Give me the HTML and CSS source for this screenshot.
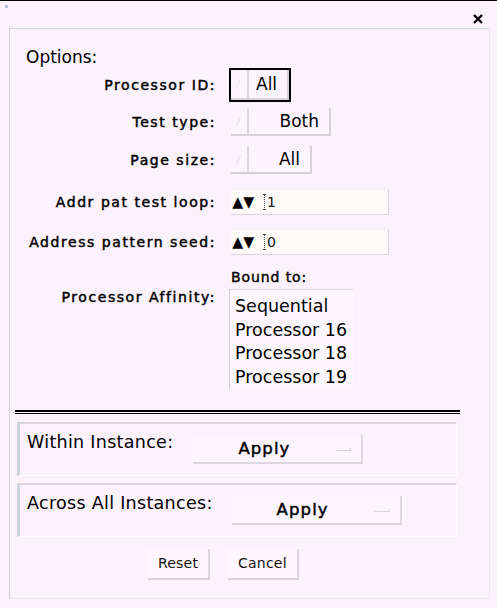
FILE: index.html
```html
<!DOCTYPE html>
<html>
<head>
<meta charset="utf-8">
<link rel="stylesheet" href="styles.css">
</head>
<body>
<div class="window">
  <div class="titlebar">
    <span class="corner"></span>
    <svg class="close" width="10" height="10" viewBox="0 0 10 10"><path d="M1 1L9 9M9 1L1 9" stroke="#000" stroke-width="2.4"/></svg>
  </div>
  <div class="frame">
    <div class="options-title">Options:</div>
    <div class="form">
      <div class="row r1">
        <div class="label">Processor ID:</div>
        <div class="ctl"><div class="choice focus"><span class="seg"></span><span class="val">All</span></div></div>
      </div>
      <div class="row r2">
        <div class="label">Test type:</div>
        <div class="ctl"><div class="choice w100"><span class="seg"></span><span class="val right">Both</span></div></div>
      </div>
      <div class="row r3">
        <div class="label">Page size:</div>
        <div class="ctl"><div class="choice w81"><span class="seg"></span><span class="val right">All</span></div></div>
      </div>
      <div class="row r4">
        <div class="label">Addr pat test loop:</div>
        <div class="ctl"><div class="spin"><span class="arrows"><span>▲</span><span>▼</span></span><span class="caret"></span><span class="num">1</span></div></div>
      </div>
      <div class="row r5">
        <div class="label">Address pattern seed:</div>
        <div class="ctl"><div class="spin"><span class="arrows"><span>▲</span><span>▼</span></span><span class="caret"></span><span class="num">0</span></div></div>
      </div>
      <div class="row r6">
        <div class="label"></div>
        <div class="ctl"><div class="bound">Bound to:</div></div>
      </div>
      <div class="row r7">
        <div class="label top">Processor Affinity:</div>
        <div class="ctl">
          <div class="list">
            <div>Sequential</div>
            <div>Processor 16</div>
            <div>Processor 18</div>
            <div>Processor 19</div>
          </div>
        </div>
      </div>
    </div>
    <div class="sep"></div>
    <div class="panel">
      <div class="plabel">Within Instance:</div>
      <div class="apply a1"><span class="atext">Apply</span><span class="ind"></span></div>
    </div>
    <div class="panel p2">
      <div class="plabel">Across All Instances:</div>
      <div class="apply a2"><span class="atext">Apply</span><span class="ind"></span></div>
    </div>
    <div class="buttons">
      <div class="btn">Reset</div>
      <div class="btn">Cancel</div>
    </div>
  </div>
</div>
</body>
</html>
```
FILE: styles.css
```css
html, body {
  margin: 0;
  padding: 0;
}
body {
  width: 497px;
  height: 608px;
  overflow: hidden;
  background: #fcf2fc;
  font-family: "DejaVu Sans", sans-serif;
  color: #000;
}
.window {
  border-top: 1px solid #000;
  height: 607px;
  box-sizing: border-box;
}
.titlebar {
  height: 27px;
  margin: 0 8px 0 9px;
  border-bottom: 1px solid #cdd3e3;
  position: relative;
}
.corner {
  position: absolute;
  left: -4px;
  top: 4px;
  width: 3px;
  height: 3px;
  background: #b8c0dc;
}
.close {
  position: absolute;
  right: 6px;
  top: 13px;
}
.frame {
  margin: 0 7px 0 9px;
  height: 570px;
  border-left: 1px solid #d6ccd6;
  border-right: 1px solid #efe6ef;
  border-bottom: 1px solid #efe6ef;
  box-sizing: border-box;
  display: flex;
  flex-direction: column;
}
.options-title {
  font-size: 17px;
  line-height: 20px;
  margin: 18px 0 0 16px;
}
.form {
  display: flex;
  flex-direction: column;
  margin-top: 1px;
}
.row {
  display: flex;
}
.r2 { margin-top: 6px; }
.r3 { margin-top: 10px; }
.r4 { margin-top: 15px; }
.r5 { margin-top: 14px; }
.r6 { margin-top: 13px; }
.r7 { margin-top: 3px; }
.label {
  width: 206px;
  flex: none;
  font-size: 14px;
  letter-spacing: 1.55px;
  -webkit-text-stroke: 0.45px #000;
  display: flex;
  align-items: center;
  justify-content: flex-end;
  white-space: nowrap;
}
.label.top {
  align-items: flex-start;
  padding-top: 0;
  line-height: 16px;
}
.ctl {
  display: flex;
  align-items: center;
  margin-left: 15px;
}
.r1 .ctl { height: 34px; }
.choice {
  display: flex;
  height: 28px;
  width: 58px;
  background: #fcf4fc;
  border-bottom: 2px solid #d8d0d8;
  border-right: 2px solid #d8d0d8;
  box-sizing: border-box;
}
.choice.focus {
  height: 30px;
  outline: 2px solid #000;
  outline-offset: 0;
}
.choice.w100 { width: 100px; }
.choice.w81 { width: 81px; }
.seg {
  width: 16px;
  border-right: 2px solid #ddd6e0;
  position: relative;
  flex: none;
}
.seg::after {
  content: "";
  position: absolute;
  left: 7px;
  top: 9px;
  width: 1px;
  height: 9px;
  background: #dde0ec;
  transform: skewX(-25deg);
}
.val {
  flex: 1;
  font-size: 17px;
  line-height: 27px;
  padding-left: 7px;
}
.choice.focus .val { line-height: 29px; }
.val.right {
  text-align: right;
  padding-left: 0;
  padding-right: 10px;
}
.spin {
  width: 158px;
  height: 26px;
  box-sizing: border-box;
  background: #fffafa;
  border-bottom: 1px solid #d8d4e0;
  border-right: 1px solid #d8d4e0;
  border-top: 1px solid #f6f0ea;
  display: flex;
  align-items: center;
}
.arrows {
  display: flex;
  font-size: 15px;
  margin-left: 1px;
  width: 30px;
  letter-spacing: -1px;
}
.arrows span {
  display: inline-block;
  transform: scaleX(0.95);
}
.caret {
  width: 3px;
  height: 16px;
  border-left: 1px dotted #555;
  margin-left: 2px;
  position: relative;
}
.caret::before, .caret::after {
  content: "";
  position: absolute;
  left: -2px;
  width: 3px;
  height: 1px;
  background: #444;
}
.caret::before { top: 0; }
.caret::after { bottom: 0; }
.num {
  font-size: 14px;
  margin-left: -1px;
  color: #111;
}
.bound {
  font-size: 14px;
  letter-spacing: 0.9px;
  -webkit-text-stroke: 0.4px #000;
  line-height: 18px;
}
.list {
  width: 124px;
  height: 100px;
  box-sizing: border-box;
  margin-left: -2px;
  border-top: 1px solid #dcd6e2;
  border-left: 1px solid #cfc9d9;
  background: #fdf6fd;
  padding: 5px 0 0 5px;
  font-size: 17.5px;
  line-height: 23.5px;
  white-space: nowrap;
}
.sep {
  margin: 21px 29px 0 5px;
  height: 4px;
  border-top: 2px solid #000;
  border-bottom: 1px solid #000;
  box-sizing: border-box;
}
.panel {
  margin: 8px 32px 0 7px;
  height: 54px;
  box-sizing: border-box;
  border-top: 2px solid #d9d4dc;
  border-left: 3px solid #ccd2e2;
  border-right: 1px solid #fff;
  border-bottom: 1px solid #fff;
  display: flex;
  align-items: flex-start;
}
.panel.p2 { margin-top: 7px; }
.plabel {
  font-size: 17.5px;
  letter-spacing: 0.3px;
  line-height: 20px;
  margin: 8px 0 0 7px;
  white-space: nowrap;
}
.apply {
  height: 29px;
  width: 170px;
  flex: none;
  box-sizing: border-box;
  border-bottom: 2px solid #ddd6e0;
  border-right: 2px solid #ddd6e0;
  background: #fdf5fd;
  font-size: 16.5px;
  letter-spacing: 1.1px;
  -webkit-text-stroke: 0.45px #000;
  display: flex;
  align-items: center;
  position: relative;
  margin-top: 11px;
}
.atext {
  padding-left: 45px;
}
.a1 { margin-left: 20px; }
.a2 { margin-left: 19px; }
.ind {
  position: absolute;
  right: 10px;
  top: 13px;
  width: 14px;
  height: 2px;
  border-bottom: 1px solid #d6d0dc;
  border-right: 1px solid #d6d0dc;
}
.buttons {
  display: flex;
  gap: 18px;
  margin: 12px 0 0 138px;
}
.btn {
  height: 31px;
  box-sizing: border-box;
  padding: 0 10px;
  font-size: 14px;
  letter-spacing: 0.2px;
  line-height: 29px;
  background: #fdf7fd;
  border-bottom: 2px solid #d9d3df;
  border-right: 2px solid #d9d3df;
  color: #111;
}
```
